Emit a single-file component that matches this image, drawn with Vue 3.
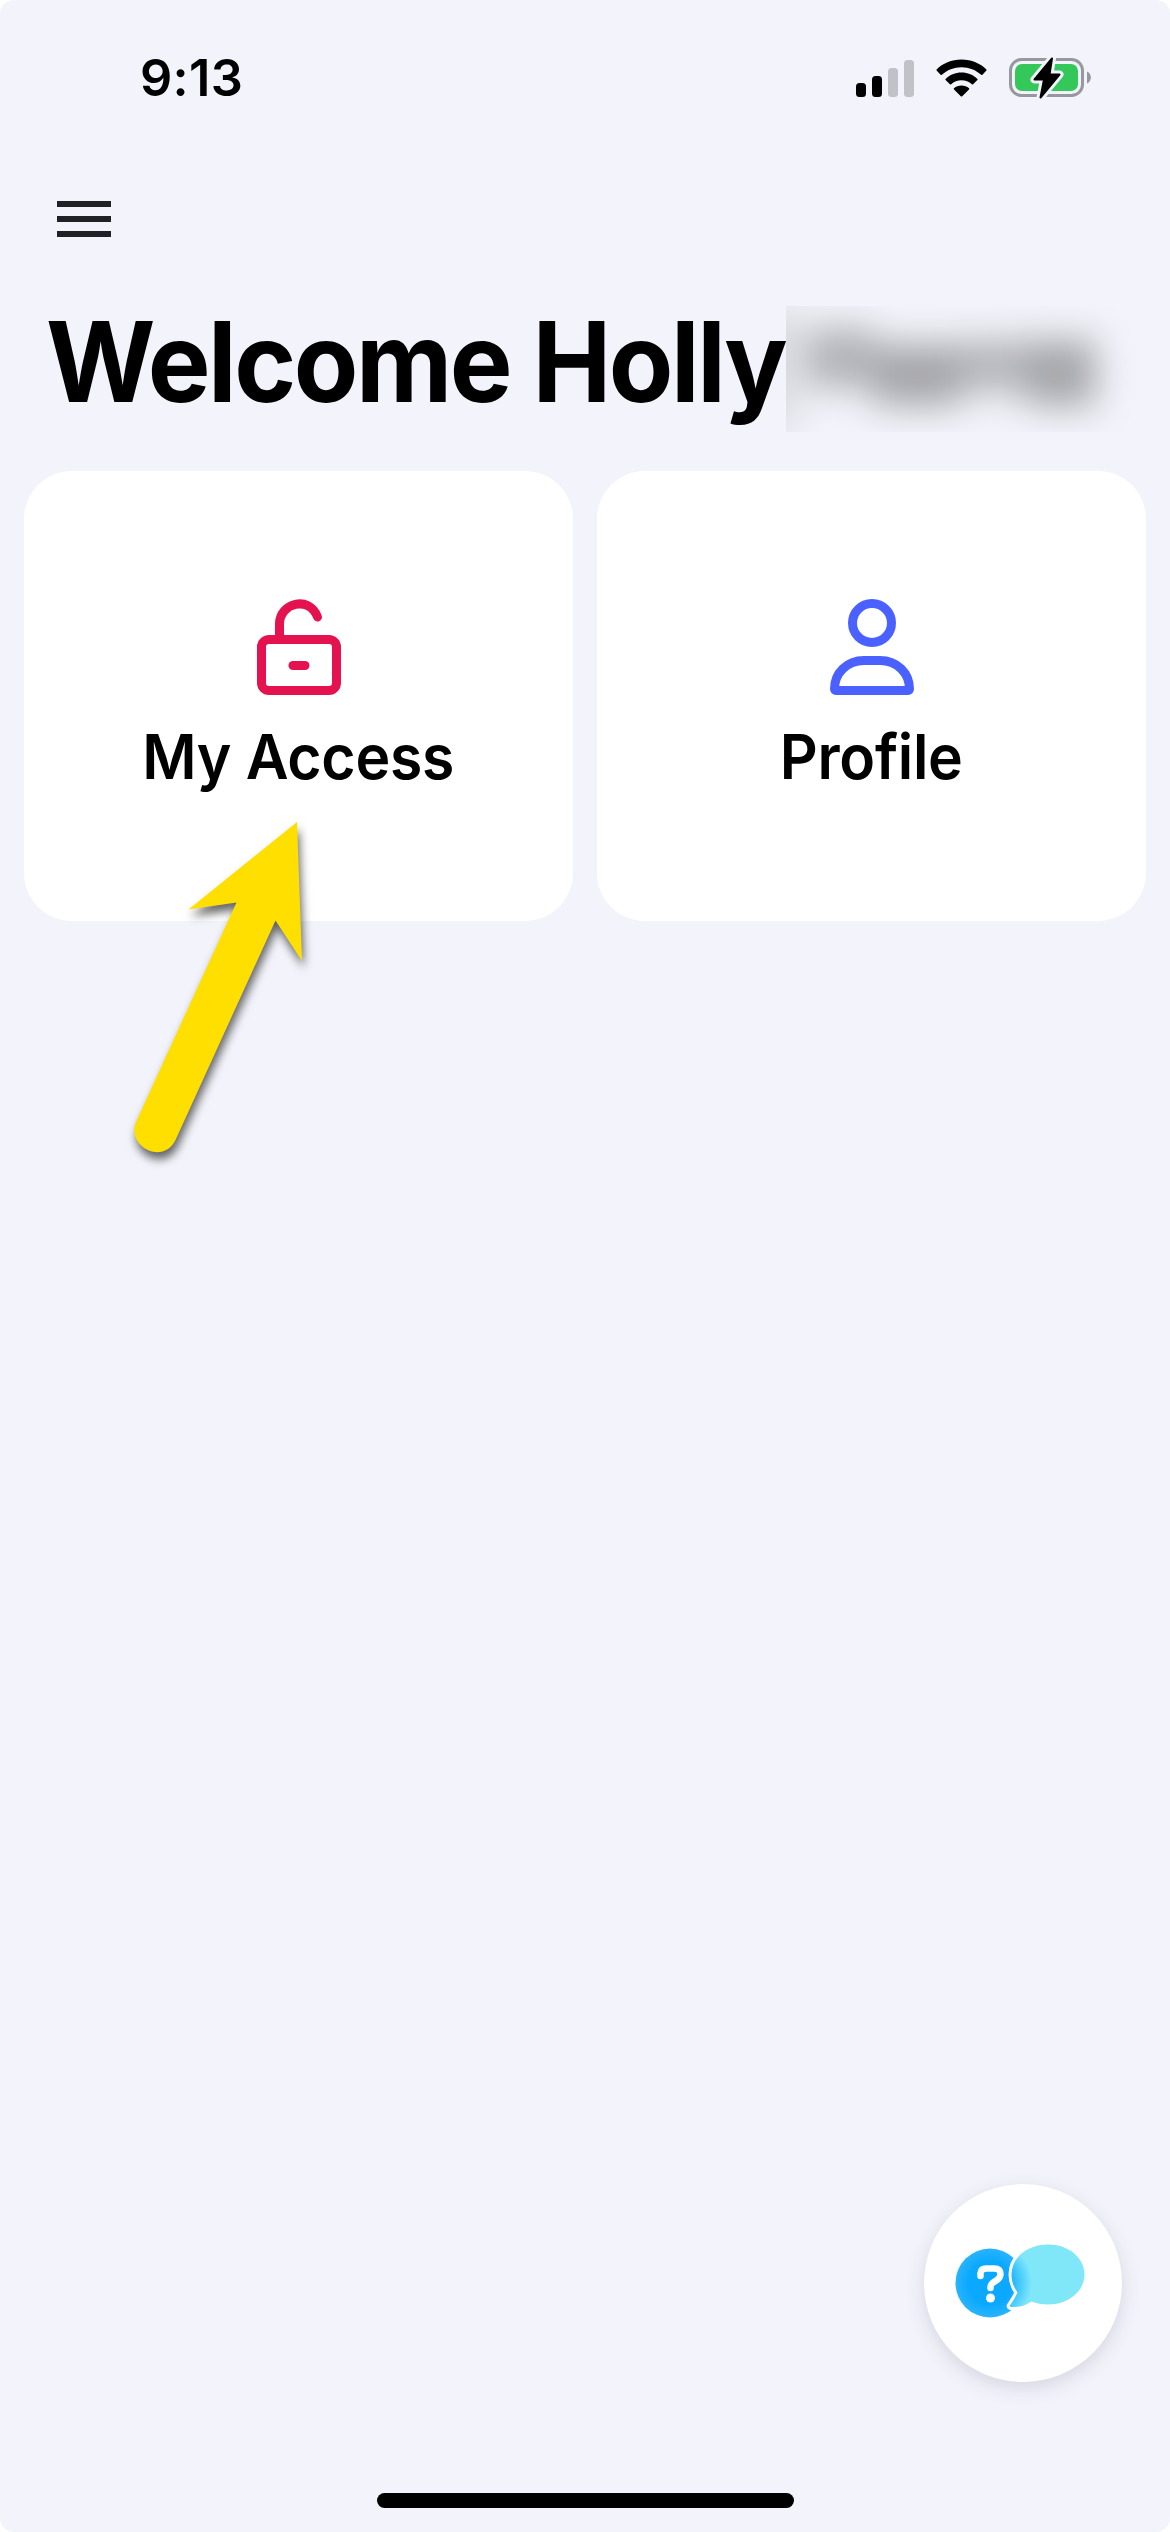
<template>
  <div class="screen">
    <header class="status-bar">
      <span class="time">9:13</span>
      <div class="indicators">
        <svg class="signal" viewBox="0 0 58 37">
          <rect x="0" y="23" width="10" height="14" rx="3.5" />
          <rect x="16" y="16" width="10" height="21" rx="3.5" />
          <rect class="off" x="32" y="8" width="10" height="29" rx="3.5" />
          <rect class="off" x="48" y="0" width="10" height="37" rx="3.5" />
        </svg>
        <svg class="wifi" viewBox="0 0 51 38">
          <path d="M25.5 .5C35.5 .5 44.4 4.4 50.4 10.4Q51 11 50.4 11.6L46.4 15.8Q45.8 16.4 45.2 15.8C40 11 33 8.2 25.5 8.2S11 11 5.8 15.8Q5.2 16.4 4.6 15.8L.6 11.6Q0 11 .6 10.4C6.6 4.4 15.5 .5 25.5 .5Z" />
          <path d="M25.5 13.6C31.7 13.6 37.3 16 41.4 19.9Q42 20.5 41.4 21.1L37.1 25.3Q36.5 25.9 35.9 25.3C33.1 22.8 29.5 21.3 25.5 21.3S17.9 22.8 15.1 25.3Q14.5 25.9 13.9 25.3L9.6 21.1Q9 20.5 9.6 19.9C13.7 16 19.3 13.6 25.5 13.6Z" />
          <path d="M25.5 26.5C28.4 26.5 31 27.5 33 29.2Q33.6 29.8 33 30.4L26.2 37.2Q25.5 37.9 24.8 37.2L18 30.4Q17.4 29.8 18 29.2C20 27.5 22.6 26.5 25.5 26.5Z" />
        </svg>
        <svg class="battery" viewBox="0 0 83 42">
          <rect class="shell" x="1.5" y="2.5" width="72" height="36" rx="11" />
          <path class="cap" d="M78 14.5C83.2 16.5 83.2 24.5 78 26.5Z" />
          <rect class="charge" x="6" y="7" width="63" height="27" rx="7" />
          <path class="bolt-edge" d="M43 1.5L25.5 22.5H35L31.5 40.5L50.5 17.5H40.5Z" />
          <path class="bolt" d="M43 1.5L25.5 22.5H35L31.5 40.5L50.5 17.5H40.5Z" />
        </svg>
      </div>
    </header>

    <button class="menu" aria-label="Menu">
      <span></span>
      <span></span>
      <span></span>
    </button>

    <div class="welcome">
      <h1>Welcome Holly</h1>
      <div class="hidden-name">
        <svg viewBox="0 0 360 126">
          <defs>
            <filter id="soften" filterUnits="userSpaceOnUse" x="-80" y="-80" width="520" height="290">
              <feGaussianBlur stdDeviation="18" />
            </filter>
          </defs>
          <g filter="url(#soften)">
            <rect x="-50" y="0" width="60" height="126" opacity=".1" />
            <rect x="20" y="22" width="68" height="60" opacity=".27" />
            <rect x="88" y="38" width="86" height="62" opacity=".32" />
            <rect x="174" y="34" width="66" height="52" opacity=".26" />
            <rect x="240" y="34" width="70" height="66" opacity=".32" />
          </g>
        </svg>
      </div>
    </div>

    <main class="cards">
      <section v-for="card in cards" :key="card.label" class="card">
        <svg v-if="card.icon === 'lock'" class="icon lock" viewBox="0 0 84 96">
          <rect x="4.5" y="40.5" width="75" height="51" rx="7.5" />
          <path d="M22.5 40.5V25C22.5 4 52 -4 60.5 18" />
          <path d="M36 66.5H48" />
        </svg>
        <svg v-else class="icon person" viewBox="0 0 84 96">
          <circle cx="42" cy="24" r="19.5" />
          <path d="M34 61.5H50C67 61.5 79.5 74 79.5 90Q79.5 91.5 78 91.5H6Q4.5 91.5 4.5 90C4.5 74 17 61.5 34 61.5Z" />
        </svg>
        <h2>{{ card.label }}</h2>
      </section>
    </main>

    <!-- pointer towards the first card -->
    <svg class="arrow" viewBox="0 0 230 370">
      <path d="M187 22L78.5 109.5L126.5 102.5L26.5 321C15 346 53 366 65.5 340L165.5 120.5L192 161Z" />
    </svg>

    <button class="chat" aria-label="Help">
      <svg viewBox="0 0 130 76">
        <defs>
          <radialGradient id="ask" gradientUnits="userSpaceOnUse" cx="35" cy="39" r="36">
            <stop offset=".6" stop-color="#0aa9ff" />
            <stop offset="1" stop-color="#2cb5fc" />
          </radialGradient>
          <radialGradient id="reply" gradientUnits="userSpaceOnUse" cx="35" cy="39" r="42">
            <stop offset=".5" stop-color="#1ab4fd" />
            <stop offset="1" stop-color="#80e7f9" />
          </radialGradient>
        </defs>
        <circle cx="35" cy="39" r="34.5" fill="url(#ask)" />
        <path class="reply" d="M93 .5C114 .5 129.5 14 129.5 30.5S114 60.5 93 60.5C87 60.5 81 59.3 76.5 57.5C70 62 63 63.5 56 63Q53.5 62.5 55.5 60.5C58 57 60.5 53 62.5 48.5C58.5 43 56.5 37 56.5 30.5C56.5 14 72 .5 93 .5Z" />
        <path class="question" d="M25.5 32V29Q26 24.5 31 24.5H39Q45.5 24.5 45.5 30Q45.5 33.5 42 36L37.5 39Q35.5 40.5 35.5 44" />
        <circle class="dot" cx="35.5" cy="54" r="4.5" />
      </svg>
    </button>

    <div class="home-indicator"></div>
  </div>
</template>

<script setup>
const cards = [
  { label: 'My Access', icon: 'lock' },
  { label: 'Profile', icon: 'person' },
];
</script>

<style>
body {
  margin: 0;
  background: #fff;
}
</style>

<style scoped>
.screen {
  position: relative;
  box-sizing: border-box;
  width: 1170px;
  height: 2532px;
  display: flex;
  flex-direction: column;
  overflow: hidden;
  border-radius: 14px;
  background: #f3f4fb;
  color: #000;
  font-family: Inter, "Liberation Sans", sans-serif;
}

button {
  padding: 0;
  border: 0;
  background: none;
}

/* Status bar */
.status-bar {
  display: flex;
  justify-content: space-between;
  align-items: center;
  height: 156px;
  padding: 0 78px 0 140px;
}

.time {
  font-size: 50.5px;
  font-weight: 600;
  line-height: 60px;
  letter-spacing: 0.3px;
}

.indicators {
  display: flex;
  align-items: center;
  gap: 22px;
}

.signal {
  width: 58px;
  height: 37px;
}

.signal .off {
  fill: #c1c2c8;
}

.wifi {
  width: 51px;
  height: 38px;
}

.battery {
  width: 83px;
  height: 42px;
}

.shell {
  fill: none;
  stroke: #97989d;
  stroke-width: 3;
}

.cap {
  fill: #97989d;
}

.charge {
  fill: #34c759;
}

.bolt-edge {
  fill: #f3f4fb;
  stroke: #f3f4fb;
  stroke-width: 8;
  stroke-linejoin: round;
}

.bolt {
  stroke: #000;
  stroke-width: 2;
  stroke-linejoin: round;
}

/* Header */
.menu {
  display: flex;
  flex-direction: column;
  gap: 9px;
  width: 54px;
  margin: 45px 0 0 57px;
}

.menu span {
  height: 6px;
  background: #202125;
}

.welcome {
  display: flex;
  height: 126px;
  margin-top: 69px;
  padding-left: 46px;
}

/* slightly condensed */
h1 {
  width: 740px;
  margin: -7px 0 0;
  font-size: 111px;
  font-weight: 700;
  line-height: 126px;
  letter-spacing: -2.6px;
  white-space: nowrap;
  transform: scaleX(0.95);
  transform-origin: left;
}

.hidden-name {
  width: 360px;
  overflow: hidden;
}

.hidden-name svg {
  display: block;
  width: 360px;
  height: 126px;
}

/* Cards */
.cards {
  display: grid;
  grid-template-columns: 1fr 1fr;
  gap: 24px;
  margin-top: 39px;
  padding: 0 24px;
}

.card {
  display: flex;
  flex-direction: column;
  align-items: center;
  box-sizing: border-box;
  height: 450px;
  padding-top: 128px;
  border-radius: 48px;
  background: #fff;
}

.icon {
  width: 84px;
  height: 96px;
  fill: none;
  stroke-width: 9;
  stroke-linecap: round;
  stroke-linejoin: round;
  overflow: visible;
}

.icon.lock {
  stroke: #e4134f;
}

.icon.person {
  stroke: #4a61ff;
}

h2 {
  margin: 24px 0 0;
  font-size: 62px;
  font-weight: 600;
  line-height: 76px;
  letter-spacing: -0.3px;
  transform: scaleX(0.95);
}

/* Overlays */
.arrow {
  position: absolute;
  top: 800px;
  left: 110px;
  width: 230px;
  height: 370px;
  overflow: visible;
  fill: #ffdf00;
  filter: drop-shadow(2px 7px 5px rgba(0, 0, 0, 0.6));
}

.chat {
  position: absolute;
  right: 48px;
  bottom: 150px;
  display: flex;
  align-items: flex-start;
  box-sizing: border-box;
  width: 198px;
  height: 198px;
  padding: 60px 0 0 31px;
  border-radius: 50%;
  background: #fff;
  box-shadow: 0 6px 20px rgba(30, 30, 60, 0.14);
}

.chat svg {
  width: 130px;
  height: 76px;
  overflow: visible;
}

.reply {
  fill: url(#reply);
  stroke: #fff;
  stroke-width: 6;
  paint-order: stroke;
}

.question {
  fill: none;
  stroke: #fff;
  stroke-width: 6.5;
  stroke-linecap: round;
}

.dot {
  fill: #fff;
}

.home-indicator {
  width: 417px;
  height: 15px;
  margin: auto auto 24px 377px;
  border-radius: 8px;
  background: #000;
}
</style>
